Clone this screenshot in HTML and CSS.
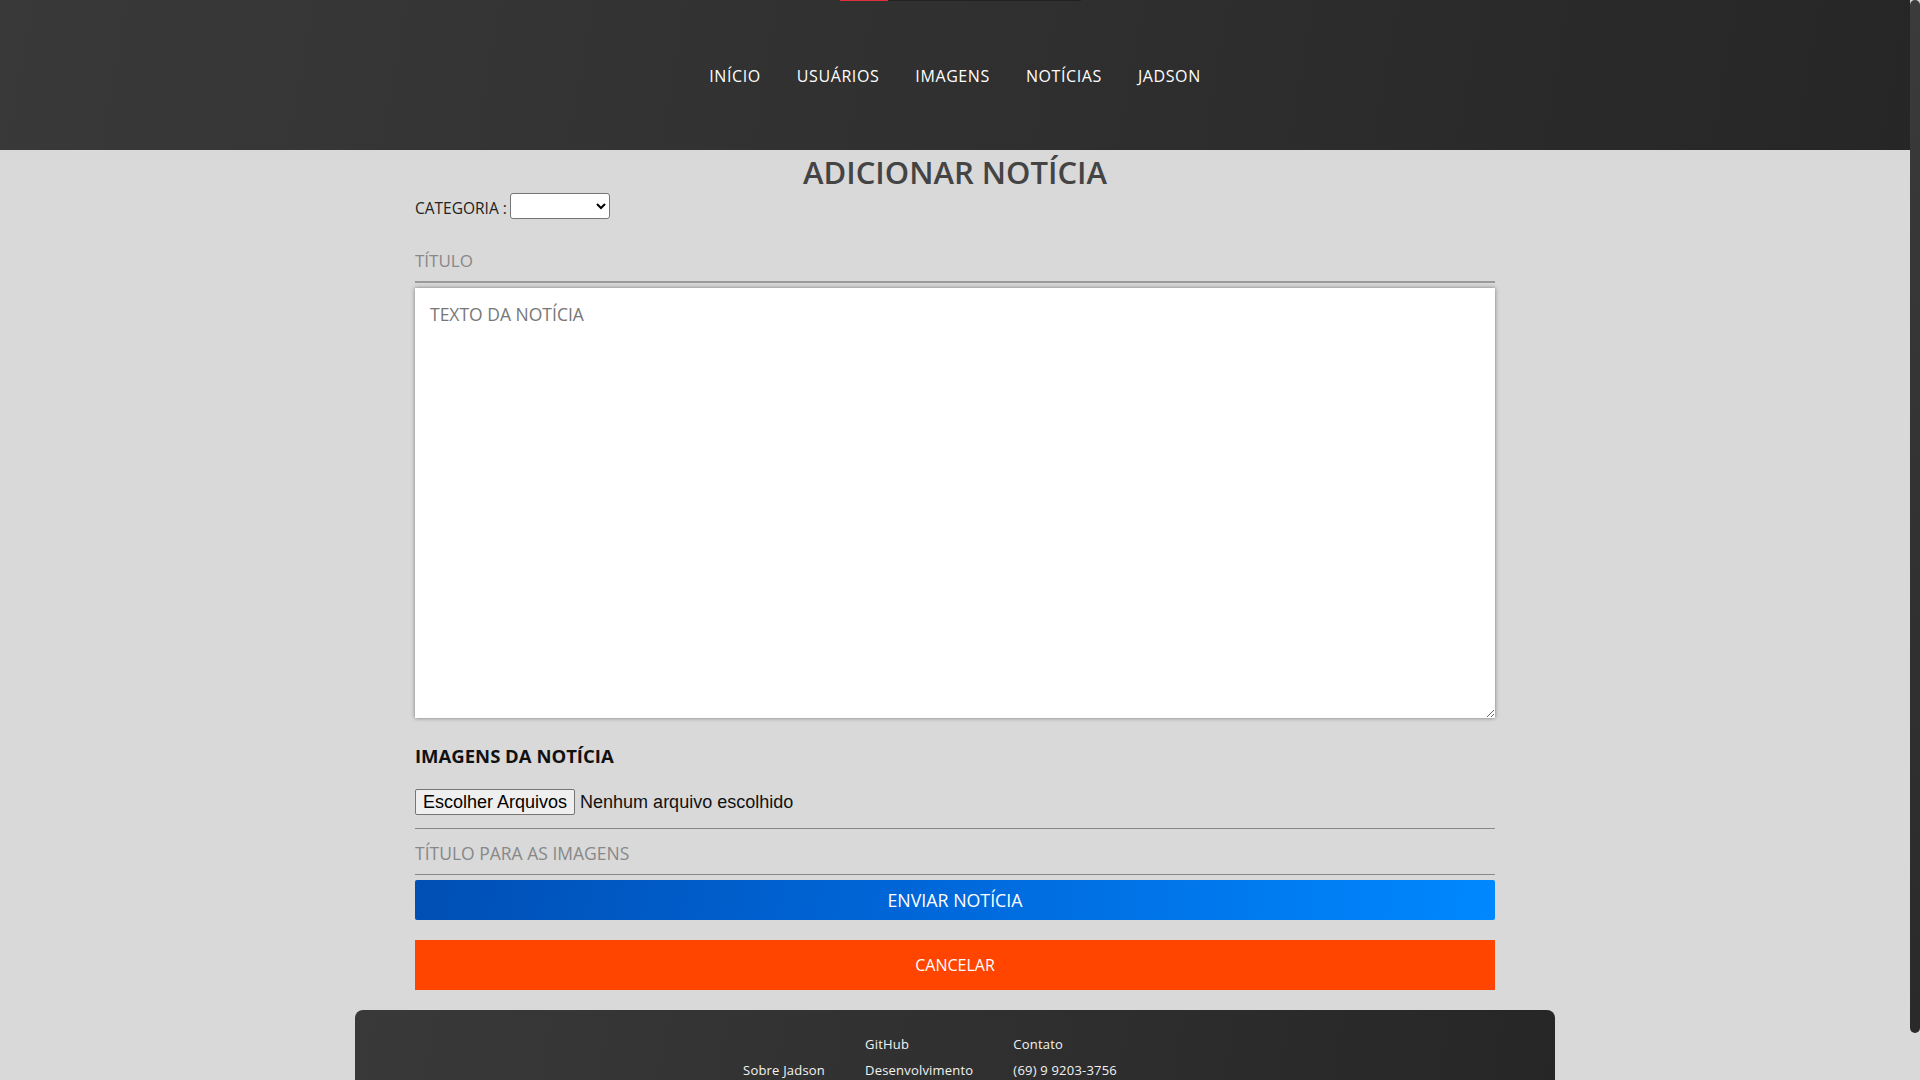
FILE: index.html
```html
<!DOCTYPE html>
<html lang="pt-BR">
<head>
<meta charset="utf-8">
<title>Adicionar Notícia</title>
<link rel="stylesheet" href="styles.css">
</head>
<body>
<div class="loader"><span class="loader-fill"></span></div>
<div class="fake-scrollbar" aria-hidden="true"><span class="fake-thumb"></span></div>
<header class="site-header">
  <nav class="main-nav">
    <a href="#">INÍCIO</a>
    <a href="#">USUÁRIOS</a>
    <a href="#">IMAGENS</a>
    <a href="#">NOTÍCIAS</a>
    <a href="#">JADSON</a>
  </nav>
</header>
<main class="content">
  <h1 class="page-title">ADICIONAR NOTÍCIA</h1>
  <div class="category-row">
    <label class="category-label" for="cat">CATEGORIA :</label>
    <select id="cat" class="category-select"><option></option></select>
  </div>
  <input class="line-input title-input" type="text" placeholder="TÍTULO">
  <textarea class="news-text" placeholder="TEXTO DA NOTÍCIA"></textarea>
  <h3 class="section-title">IMAGENS DA NOTÍCIA</h3>
  <div class="file-row">
    <button class="file-btn" type="button">Escolher Arquivos</button><span class="file-status">Nenhum arquivo escolhido</span>
  </div>
  <input class="line-input images-input" type="text" placeholder="TÍTULO PARA AS IMAGENS">
  <button class="btn btn-send" type="button">ENVIAR NOTÍCIA</button>
  <button class="btn btn-cancel" type="button">CANCELAR</button>
</main>
<footer class="site-footer">
  <div class="footer-cols">
    <div class="footer-col"><span class="footer-head">&nbsp;</span><a href="#">Sobre Jadson</a></div>
    <div class="footer-col"><span class="footer-head">GitHub</span><a href="#">Desenvolvimento</a></div>
    <div class="footer-col"><span class="footer-head">Contato</span><a href="#">(69) 9 9203-3756</a></div>
  </div>
</footer>
</body>
</html>
```
FILE: styles.css
```css
html {
  background: #d9d9d9;
  scrollbar-width: none;
}
body {
  margin: 0;
  padding-right: 10px;
  background: #d9d9d9;
  font-family: "Open Sans", "Noto Sans", sans-serif;
  color: #222;
}

.fake-scrollbar {
  position: fixed;
  top: 0;
  right: 0;
  width: 10px;
  height: 100%;
  background: #d9d9d9;
  z-index: 5;
}
.fake-thumb {
  display: block;
  width: 10px;
  height: 1033px;
  border-radius: 5px;
  background: linear-gradient(180deg, #3b3b3b, #2a2a2a);
}

.loader {
  position: absolute;
  top: 0;
  left: 840px;
  width: 241px;
  height: 1px;
  background: #222;
  z-index: 2;
}
.loader-fill {
  display: block;
  width: 48px;
  height: 1px;
  background: #e0303a;
}

.site-header {
  height: 150px;
  background: linear-gradient(100deg, #393939 0%, #2f2f2f 55%, #262626 100%);
  display: flex;
  align-items: center;
  justify-content: center;
}
.main-nav {
  display: flex;
  gap: 36px;
  margin-top: 2px;
}
.main-nav a {
  color: #fff;
  text-decoration: none;
  font-size: 16px;
  letter-spacing: 0.6px;
}

.content {
  width: 1080px;
  margin: 0 auto;
  display: flex;
  flex-direction: column;
}
.page-title {
  margin: 2px 0 0;
  text-align: center;
  font-size: 31px;
  font-weight: 600;
  color: #444;
  line-height: 41px;
}
.category-row {
  display: flex;
  align-items: center;
  gap: 3px;
  height: 26px;
}
.category-label {
  font-size: 15.5px;
  color: #222;
  margin-top: 4px;
}
.category-select {
  width: 100px;
  height: 26px;
  background: #fff;
  border: 1px solid #767676;
  border-radius: 3px;
  font-family: "Liberation Sans", Arial, sans-serif;
}
.line-input {
  background: transparent;
  border: none;
  outline: none;
  font-family: "Open Sans", "Noto Sans", sans-serif;
  color: #333;
  line-height: 22px;
}
.line-input::placeholder { color: #888; }
.title-input {
  margin-top: 21px;
  font-size: 17px;
  padding: 10px 0 9px;
  border-bottom: 2px solid #9a9a9a;
}
.news-text {
  margin-top: 5px;
  height: 430px;
  box-sizing: border-box;
  padding: 15px;
  border: none;
  outline: none;
  background: #fff;
  box-shadow: 0 0 4px rgba(0, 0, 0, 0.45);
  font-family: "Open Sans", "Noto Sans", sans-serif;
  font-size: 17.5px;
  line-height: 22px;
  color: #333;
  resize: vertical;
}
.news-text::placeholder { color: #777; }
.section-title {
  margin: 25px 0 0;
  font-size: 18.5px;
  font-weight: 700;
  color: #111;
  line-height: 25px;
}
.file-row {
  display: flex;
  align-items: center;
  padding: 21px 0 13px;
  border-bottom: 1px solid #888;
}
.file-btn {
  height: 26px;
  padding: 0 7px;
  background: #efefef;
  border: 1px solid #767676;
  border-radius: 2px;
  font-family: "Liberation Sans", Arial, sans-serif;
  font-size: 18px;
  line-height: 20px;
  color: #000;
}
.file-status {
  margin-left: 5px;
  font-family: "Liberation Sans", Arial, sans-serif;
  font-size: 18px;
  line-height: 20px;
  color: #111;
}
.images-input {
  font-size: 17.5px;
  padding: 13px 0 10px;
  border-bottom: 1px solid #888;
}
.btn {
  border: none;
  width: 100%;
  color: #fff;
  font-family: "Open Sans", "Noto Sans", sans-serif;
  cursor: pointer;
}
.btn-send {
  margin-top: 5px;
  height: 40px;
  font-size: 17.8px;
  border-radius: 2px;
  background: linear-gradient(100deg, #004fb4 0%, #0066d8 45%, #0088ff 100%);
}
.btn-cancel {
  margin-top: 20px;
  height: 50px;
  font-size: 16px;
  background: #ff4500;
}

.site-footer {
  width: 1200px;
  height: 119px;
  margin: 20px auto 0;
  border-radius: 8px 8px 0 0;
  background: linear-gradient(100deg, #393939 0%, #2f2f2f 55%, #262626 100%);
  box-sizing: border-box;
  padding-top: 25px;
}
.footer-cols {
  display: flex;
  justify-content: center;
  gap: 40px;
  padding-right: 50px;
}
.footer-col {
  display: flex;
  flex-direction: column;
  gap: 8px;
}
.footer-col a, .footer-head {
  color: #f2f2f2;
  text-decoration: none;
  font-size: 13px;
  line-height: 18px;
  letter-spacing: 0.2px;
}
```
